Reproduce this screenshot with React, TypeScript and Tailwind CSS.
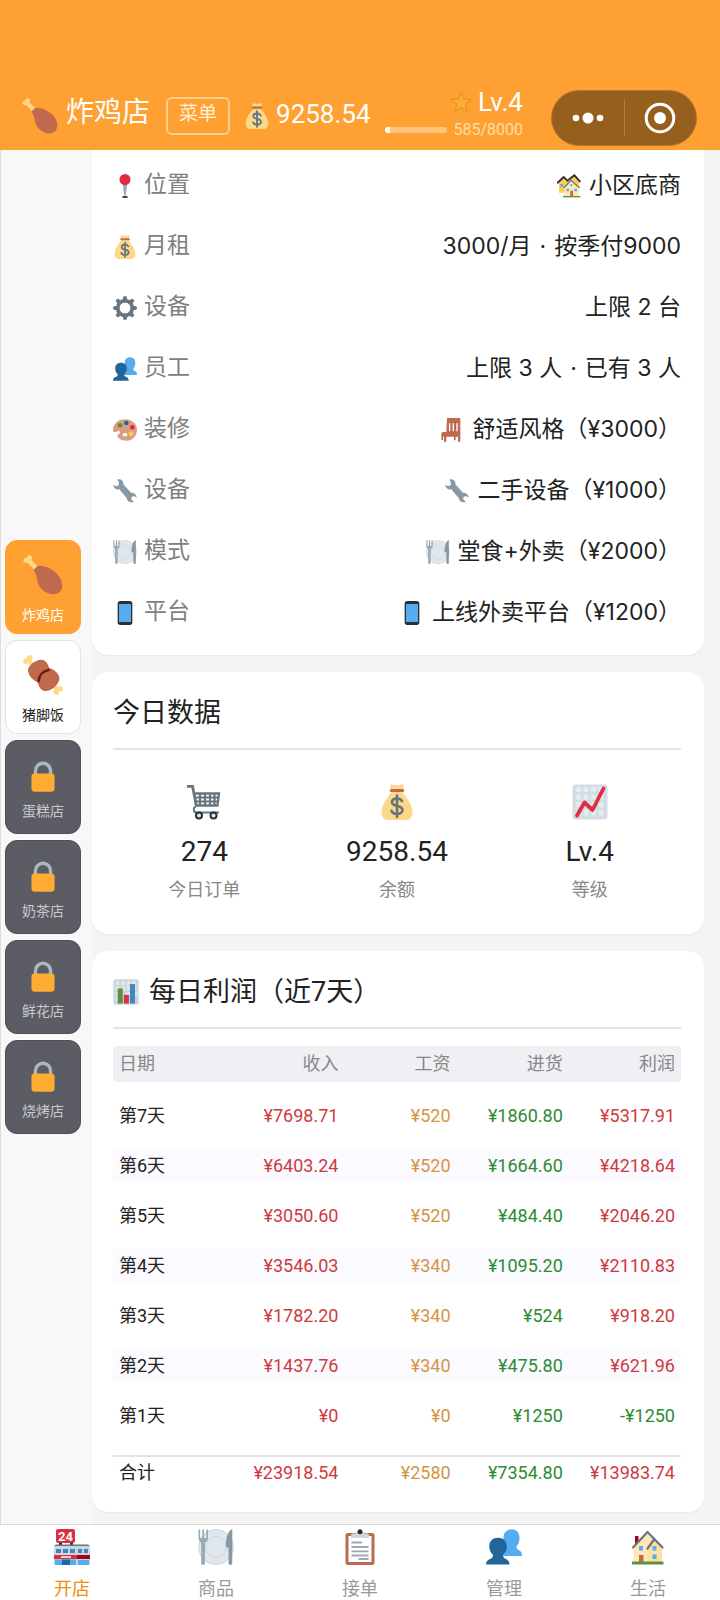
import type { ReactNode } from "react";

type IconName =
  | "leg" | "meat" | "lock" | "bag" | "pin" | "gear" | "people" | "palette" | "wrench"
  | "plate" | "phone" | "houses" | "chair" | "cart" | "trend" | "bars" | "star"
  | "store" | "clipboard" | "house";

const drawings: Record<IconName, ReactNode> = {
  leg: (
    <>
      <path d="M4.5 4.5 13 13" stroke="#FFD983" strokeWidth="4.2" strokeLinecap="round" />
      <circle cx="2.8" cy="4.8" r="2.4" fill="#FFD983" />
      <circle cx="5.8" cy="2.6" r="2.3" fill="#FFD983" />
      <path d="M9.6 13.8C10.6 12 12.5 10 14.2 9.7 17 9.5 23 10.5 28.5 15 33 18.5 35.5 23.5 35.3 28 35 33 31.5 35.5 27 35.4 21 35.3 15.500 31 13.600 25.500 12.400 22 12.500 17.500 9.600 13.800Z" fill="#C1694F" />
    </>
  ),
  meat: (
    <>
      <path d="M4.500 4.500 31.500 31.500" stroke="#FFD983" strokeWidth="3.800" />
      <circle cx="2.600" cy="5.600" r="2.500" fill="#FFD983" />
      <circle cx="6" cy="2.600" r="2.500" fill="#FFD983" />
      <circle cx="33.400" cy="30.400" r="2.500" fill="#FFD983" />
      <circle cx="30" cy="33.400" r="2.500" fill="#FFD983" />
      <path d="M4.500 14.500C3.500 10.500 11 4 16.500 4.200 20.500 4.500 22.700 7.800 23.400 11.800 27.500 12.800 32 16 32.700 20.500 33.300 25.700 26 32.500 20.500 32.500 16.300 32.300 14 28.500 13.300 24.500 9 23 5.500 19.500 4.500 14.500Z" fill="#C1694F" />
      <path d="M14 23.500C14.500 18.500 18 14.500 23 13.500" stroke="#662113" strokeWidth="2.400" strokeLinecap="round" fill="none" />
    </>
  ),
  lock: (
    <>
      <path d="M9.500 18V11a8.500 8.500 0 0 1 17 0v7" stroke="#AAB8C2" strokeWidth="3.800" fill="none" />
      <rect x="5" y="14" width="26" height="20.500" rx="3.500" fill="#FFAC33" />
    </>
  ),
  bag: (
    <>
      <path d="M23.500 8C27 13 33 20 33.500 27.500 33.800 33.500 31 36 26 36H10C5 36 2.200 33.500 2.500 27.500 3 20 9 13 12.500 8Z" fill="#FDD888" />
      <path d="M11.500 1C11.500 0 12.500.3 13.500.6 16 1.300 20 1.300 22.500.6 23.500.3 24.500 0 24.500 1V5.200H11.500Z" fill="#FDD888" />
      <rect x="10.800" y="5" width="14.400" height="3" rx="1.500" fill="#BF6952" />
      <path d="M23 17.200C22 15.200 20.500 14.500 18 14.500 15 14.500 13 16 13 18.300 13 23.500 23.500 20.500 23.500 26 23.500 28.500 21 30 18 30 15.300 30 13.300 29 12.500 26.800M18 11.500V33" stroke="#67757F" strokeWidth="2.600" strokeLinecap="round" fill="none" />
    </>
  ),
  pin: (
    <>
      <ellipse cx="18" cy="34.500" rx="4.500" ry="1.500" fill="#292F33" />
      <path d="M14.500 14H21.500L19 32.500a1 1 0 0 1-2 0Z" fill="#99AAB5" />
      <circle cx="18" cy="8.300" r="8.300" fill="#DD2E44" />
    </>
  ),
  gear: (
    <>
      <circle cx="18" cy="18" r="11" fill="none" stroke="#66757F" strokeWidth="5.400" />
      <path d="M18 3V7M18 29V33M3 18H7M29 18H33M7.400 7.400 10 10M26 26 28.600 28.600M28.600 7.400 26 10M10 26 7.400 28.600" stroke="#66757F" strokeWidth="6" strokeLinecap="round" />
    </>
  ),
  people: (
    <>
      <path d="M17.500 9C17.500 3.500 20.500.3 25.500.3S33.500 3.500 33.500 9C33.500 13 32.300 15.500 30.500 17.300 30.500 19.500 31 20.500 33.500 21.500 35.500 22.500 36 24.500 36 27H17Z" fill="#55ACEE" />
      <path d="M3.300 17.500C3.300 12 6.800 8.800 12 8.800S20.800 12 20.800 17.500C20.800 21.500 19 24 17 25.800 17 28 17.500 29 20 30 22.500 31 23.500 33 23.500 35.500H0C0 33 1 31 4 30 6.500 29 7 28 7 25.800 5 24 3.300 21.500 3.300 17.500Z" fill="#226699" />
    </>
  ),
  palette: (
    <>
      <path d="M18 2C8 2 0 9 0 18 0 21 2.500 22 5.500 20.300 9 18.300 12 19.500 10 22.500 7.500 26 5 26.500 8 29.500 11 32.500 15 34 20 34 29 34 36 27 36 17.500 36 8.500 28 2 18 2Z" fill="#D99E82" />
      <ellipse cx="18" cy="25" rx="3.600" ry="2.400" fill="#fff" />
      <circle cx="10.500" cy="11" r="3.500" fill="#5C913B" />
      <circle cx="20" cy="7.500" r="3.500" fill="#226699" />
      <circle cx="29" cy="14" r="3.500" fill="#DD2E44" />
      <circle cx="27" cy="23.500" r="3.500" fill="#FFCC4D" />
    </>
  ),
  wrench: (
    <path d="M8.500.5C12.500.3 16 3.500 15.800 8.200L27 20.500C31.500 20 35.300 23.500 35.600 27.800L31 25.500 27.500 27.500 27.700 31.300 31.500 34C27 36.500 21 34 20.500 28.500L9.500 15.500C5 16.500.8 13.800.4 8.500L5 11 8.800 9 8.700 4.800 6.700 1Z" fill="#8899A6" />
  ),
  plate: (
    <>
      <circle cx="18" cy="18" r="17.800" fill="#CCD6DD" />
      <circle cx="18" cy="18" r="16.800" fill="#E1E8ED" />
      <circle cx="18" cy="18" r="10.500" fill="#E1E8ED" stroke="#CCD6DD" />
      <path d="M.5.5V9C.5 11.500 2 13 3.200 13.500V34a1.900 1.900 0 0 0 3.800 0V13.500C8.500 13 10 11.500 10 9V.5H8.300V9H6.100V.5H4.300V9H2.200V.5Z" fill="#99AAB5" />
      <path d="M34 .3C30 2 27.800 8 27.800 18.500H30.500V34a1.900 1.900 0 0 0 3.800 0V.3Z" fill="#8899A6" />
    </>
  ),
  phone: (
    <>
      <rect x="7" y="0" width="22" height="36" rx="4" fill="#292F33" />
      <rect x="9" y="4.500" width="18" height="27" fill="#55ACEE" />
    </>
  ),
  houses: (
    <>
      <path d="M3 12 10 5 18 12V28H3Z" fill="#FFCC4D" />
      <path d="M20 7 27 3 33 11V23H20Z" fill="#FFCC4D" />
      <path d="M0 14 10 4.500 17 11M17 9 26 2 35 12" stroke="#292F33" strokeWidth="2.800" fill="none" />
      <path d="M11 20 21 9 33 20V33H11Z" fill="#FFE8B6" />
      <path d="M10 21 21 9.500 34 21" stroke="#66757F" strokeWidth="2" fill="none" />
      <path d="M5 15h4v4H5ZM14 22h4v4h-4ZM26 22h4v4h-4ZM20 15h3v3h-3Z" fill="#55ACEE" />
      <path d="M20 25h4v8h-4Z" fill="#C1694F" />
      <path d="M9 33H35v2H9Z" fill="#5C913B" />
    </>
  ),
  chair: (
    <path d="M9 1C9 .3 10 0 12 0H27C28.500 0 29 .5 29 2V34.500C29 36.500 25.500 36.500 25.500 34.500V28H22V33.500H19.500V28H8V34.500C8 36.500 4.500 36.500 4.500 34.500V28H3V33H.5V24C.5 22 2 21 4 21H8ZM12 8V20H14V8ZM17.500 8V20H19.500V8ZM23 8V20H25V8Z" fill="#C1694F" fillRule="evenodd" />
  ),
  cart: (
    <>
      <path d="M1 2.300H6.500L10.500 22.500" stroke="#66757F" strokeWidth="2.800" fill="none" />
      <path d="M8 9.500H33L31.500 21.500H10.500" fill="none" stroke="#66757F" strokeWidth="2.300" />
      <path d="M9 13.500H32.500M9.500 17.500H32M14 10V21M19 10V21M24 10V21M28.500 10V21" stroke="#66757F" strokeWidth="2.200" />
      <path d="M10 22.500C7 23.500 7 28.500 10.500 28.500H33" stroke="#66757F" strokeWidth="2" fill="none" />
      <circle cx="13" cy="31.500" r="3" fill="#E1E8ED" stroke="#292F33" strokeWidth="2" />
      <circle cx="27.500" cy="31.500" r="3" fill="#E1E8ED" stroke="#292F33" strokeWidth="2" />
    </>
  ),
  trend: (
    <>
      <rect x=".5" y=".5" width="35" height="35" rx="3" fill="#D3DCE3" />
      <path d="M4 3h5v5H4ZM11.500 3h5v5h-5ZM19 3h5v5h-5ZM26.500 3h5v5h-5ZM4 10.500h5v5H4ZM11.500 10.500h5v5h-5ZM19 10.500h5v5h-5ZM26.500 10.500h5v5h-5ZM4 18h5v5H4ZM11.500 18h5v5h-5ZM19 18h5v5h-5ZM26.500 18h5v5h-5ZM4 25.500h5v6H4ZM11.500 25.500h5v6h-5ZM19 25.500h5v6h-5ZM26.500 25.500h5v6h-5Z" fill="#E4EAEE" />
      <path d="M5 31.500 12.500 18.500 20.500 26 31.500 4.500" stroke="#DD2E44" strokeWidth="3.800" strokeLinecap="round" strokeLinejoin="round" fill="none" />
    </>
  ),
  bars: (
    <>
      <rect x=".5" y=".5" width="35" height="35" rx="3" fill="#CCD6DD" />
      <path d="M4 3h5v5H4ZM11.500 3h5v5h-5ZM19 3h5v5h-5ZM26.500 3h5v5h-5ZM4 10.500h5v5H4ZM11.500 10.500h5v5h-5ZM19 10.500h5v5h-5ZM26.500 10.500h5v5h-5ZM4 18h5v5H4ZM19 18h5v5h-5ZM4 25.500h5v6H4ZM29 18h5v5h-5Z" fill="#E1E8ED" />
      <path d="M6.500 13H13.500V34H6.500Z" fill="#5C913B" />
      <path d="M15 22H22V34H15Z" fill="#DD2E44" />
      <path d="M23.500 7H30.500V34H23.500Z" fill="#3B88C3" />
    </>
  ),
  star: (
    <path d="M18 2 22.400 13.200 34.500 13.900 25 21.500 28.300 33.500 18 26.800 7.700 33.500 11 21.500 1.500 13.900 13.600 13.200Z" fill="#FFAC33" stroke="#E08F1C" strokeWidth="1.500" strokeLinejoin="round" />
  ),
  store: (
    <>
      <path d="M5 13h3v4H5ZM16 13h3v4h-3Z" fill="#292F33" />
      <rect x="2" y="0" width="19" height="14" rx="2" fill="#DD2E44" />
      <text x="11.500" y="11.800" textAnchor="middle" fill="#fff" fontSize="13" fontWeight="700" fontFamily="Roboto, sans-serif">24</text>
      <path d="M0 17H36V36H0Z" fill="#CCD6DD" />
      <path d="M0 17 2 15.500H34L36 17Z" fill="#66757F" />
      <path d="M2 20h5v4H2ZM9 20h5v4H9ZM16 20h5v4h-5ZM24 20h4v4h-4ZM30 20h4v4h-4Z" fill="#3B88C3" />
      <path d="M0 26H23V30H0Z" fill="#DD2E44" />
      <path d="M23 26H36V30H23Z" fill="#A0041E" />
      <path d="M7 27.300h10v1.500H7Z" fill="#fff" />
      <path d="M1 30.500H22V36H1ZM24 31H35V36H24Z" fill="#55ACEE" />
      <path d="M8 30.500h8V36H8Z" fill="#226699" />
    </>
  ),
  clipboard: (
    <>
      <rect x="3.500" y="4" width="29" height="32" rx="2.500" fill="#C1694F" />
      <path d="M6.500 7H29.500V33H6.500Z" fill="#fff" />
      <path d="M9 9V6.500C9 5 10 4.500 11.500 4.500H13.500C14 2.500 16 2.500 18 2.500S22 2.500 22.500 4.500H24.500C26 4.500 27 5 27 6.500V9Z" fill="#CCD6DD" />
      <circle cx="18" cy="2.700" r="2.500" fill="#292F33" />
      <path d="M9.500 13.500H20M9.500 18H26.500M9.500 22.300H26.500M9.500 26.500H26.500M16.500 30H26.500" stroke="#99AAB5" strokeWidth="1.800" />
    </>
  ),
  house: (
    <>
      <path d="M5 7H8.500V15H5Z" fill="#A0041E" />
      <path d="M3.500 17 17 3.500 32 17V33H3.500Z" fill="#FFE8B6" />
      <path d="M17.500 19 24 9 32 17V33H17.500Z" fill="#FFE0A0" />
      <path d="M3 18.500 17.500 3 32.500 18.500M17.500 19.500 24.500 10" stroke="#66757F" strokeWidth="2.200" strokeLinecap="round" strokeLinejoin="round" fill="none" />
      <path d="M9 17h4v4.500H9ZM22.500 17h4v4.500h-4ZM22.500 25.500h4v4.500h-4Z" fill="#55ACEE" />
      <path d="M9 26h4.500v7H9Z" fill="#C1694F" />
      <path d="M2 32.500H33.500V35.500H2Z" fill="#5C913B" />
    </>
  ),
};

function Icon({ name, className }: { name: IconName; className: string }) {
  return (
    <svg viewBox="0 0 36 36" fill="none" aria-hidden="true" className={`shrink-0 ${className}`}>
      {drawings[name]}
    </svg>
  );
}

const details: { icon: IconName; label: string; valueIcon?: IconName; value: string[] }[] = [
  { icon: "pin", label: "位置", valueIcon: "houses", value: ["小区底商"] },
  { icon: "bag", label: "月租", value: ["3000/月", "·", "按季付9000"] },
  { icon: "gear", label: "设备", value: ["上限 2 台"] },
  { icon: "people", label: "员工", value: ["上限 3 人", "·", "已有 3 人"] },
  { icon: "palette", label: "装修", valueIcon: "chair", value: ["舒适风格（¥3000）"] },
  { icon: "wrench", label: "设备", valueIcon: "wrench", value: ["二手设备（¥1000）"] },
  { icon: "plate", label: "模式", valueIcon: "plate", value: ["堂食+外卖（¥2000）"] },
  { icon: "phone", label: "平台", valueIcon: "phone", value: ["上线外卖平台（¥1200）"] },
];

const stats: { icon: IconName; value: string; label: string }[] = [
  { icon: "cart", value: "274", label: "今日订单" },
  { icon: "bag", value: "9258.54", label: "余额" },
  { icon: "trend", value: "Lv.4", label: "等级" },
];

const profits = [
  ["第7天", "¥7698.71", "¥520", "¥1860.80", "¥5317.91"],
  ["第6天", "¥6403.24", "¥520", "¥1664.60", "¥4218.64"],
  ["第5天", "¥3050.60", "¥520", "¥484.40", "¥2046.20"],
  ["第4天", "¥3546.03", "¥340", "¥1095.20", "¥2110.83"],
  ["第3天", "¥1782.20", "¥340", "¥524", "¥918.20"],
  ["第2天", "¥1437.76", "¥340", "¥475.80", "¥621.96"],
  ["第1天", "¥0", "¥0", "¥1250", "-¥1250"],
];

const totals = ["合计", "¥23918.54", "¥2580", "¥7354.80", "¥13983.74"];

const shops: { name: string; state: "active" | "open" | "locked"; icon: IconName }[] = [
  { name: "炸鸡店", state: "active", icon: "leg" },
  { name: "猪脚饭", state: "open", icon: "meat" },
  { name: "蛋糕店", state: "locked", icon: "lock" },
  { name: "奶茶店", state: "locked", icon: "lock" },
  { name: "鲜花店", state: "locked", icon: "lock" },
  { name: "烧烤店", state: "locked", icon: "lock" },
];

const shopStyles = {
  active: "bg-[#ffa132] border-[#ffa132] text-white gap-2.5 pt-3.5",
  open: "bg-white border-[#e2e2e2] text-[#222] gap-2.5 pt-3.5",
  locked: "bg-[#5b5c64] border-[#4d4e56] text-[#c9c9cc] gap-2 pt-5",
};

const tabs: { icon: IconName; label: string }[] = [
  { icon: "store", label: "开店" },
  { icon: "plate", label: "商品" },
  { icon: "clipboard", label: "接单" },
  { icon: "people", label: "管理" },
  { icon: "house", label: "生活" },
];

function amountColor(column: number, text: string) {
  if (column === 0) return "text-[#222] text-left";
  if (column === 2) return "text-[#d49544] text-right";
  if (column === 3 || text.startsWith("-")) return "text-[#2e8b32] text-right";
  return "text-[#cf3a3f] text-right";
}

function Header() {
  return (
    <header className="flex h-[150px] items-end bg-[#ffa132] pr-[23px] pb-1 pl-[22px] text-white">
      <div className="flex h-14 flex-1 items-center pb-1">
        <Icon name="leg" className="h-9 w-9" />
        <h1 className="ml-2 pb-1.5 text-[28px] leading-9">炸鸡店</h1>
        <button className="ml-4 flex h-[38px] w-16 items-center justify-center rounded-md border-2 border-[#ffcf8f] pb-1 text-[19px] text-[#fff0d8]">
          菜单
        </button>
        <Icon name="bag" className="ml-3.5 h-[26px] w-[26px]" />
        <span className="ml-1.5 pb-1 text-[26px] leading-9">9258.54</span>
      </div>
      <div className="mr-7 flex h-14 flex-col items-end justify-between">
        <div className="flex items-center gap-1.5 text-[26px] leading-6">
          <Icon name="star" className="h-[22px] w-[22px]" />
          Lv.4
        </div>
        <div className="flex items-center gap-1.5 text-base leading-8 text-[#ffdcab]">
          <div className="h-1.5 w-[62px] overflow-hidden rounded-full bg-[#ffc37c]">
            <div className="h-full bg-white" style={{ width: `${(585 / 8000) * 100}%` }} />
          </div>
          585/8000
        </div>
      </div>
      <div className="flex h-14 w-[146px] items-center rounded-full border border-[#b5752b] bg-[#965f1e]">
        <button aria-label="更多" className="flex h-full flex-1 items-center justify-center">
          <svg viewBox="0 0 32 12" className="h-3 w-8" fill="#fff">
            <circle cx="4" cy="6" r="3.300" />
            <circle cx="16" cy="6" r="5.500" />
            <circle cx="28" cy="6" r="3.300" />
          </svg>
        </button>
        <div className="h-9 w-px bg-[#b5803f]" />
        <button aria-label="关闭" className="flex h-full flex-1 items-center justify-center">
          <svg viewBox="0 0 32 32" className="h-8 w-8" fill="none">
            <circle cx="16" cy="16" r="13.800" stroke="#fff" strokeWidth="3" />
            <circle cx="16" cy="16" r="6" fill="#fff" />
          </svg>
        </button>
      </div>
    </header>
  );
}

function CardTitle({ children }: { children: ReactNode }) {
  return (
    <h2 className="flex h-[78px] items-center gap-2.5 border-b-2 border-[#e4e4e4] pt-1.5 text-[27px] text-[#222]">
      {children}
    </h2>
  );
}

export default function App() {
  return (
    <div lang="zh-CN" className="flex min-h-screen flex-col bg-[#f4f4f4] font-[Roboto,'Noto_Sans_CJK_SC',sans-serif]">
      <Header />
      <div className="flex flex-1">
        <aside className="flex w-[92px] shrink-0 flex-col justify-center gap-1.5 border-l border-[#dcdcdc] bg-[#f8f8f8] pl-1">
          {shops.map((shop) => (
            <button
              key={shop.name}
              className={`flex h-[94px] w-[76px] flex-col items-center rounded-xl border text-sm leading-5 ${shopStyles[shop.state]}`}
            >
              <Icon name={shop.icon} className={shop.state === "locked" ? "h-8 w-8" : "h-10 w-10"} />
              {shop.name}
            </button>
          ))}
        </aside>

        <main className="flex min-w-0 flex-1 flex-col gap-[17px] pr-4 pb-3">
          <section className="rounded-b-2xl bg-white pt-[5px] pr-[23px] pb-3 pl-[21px] shadow-xs">
            <dl>
              {details.map((row) => (
                <div key={row.icon} className="flex h-[61px] items-center justify-between text-[23px]">
                  <dt className="flex items-center gap-[7px] text-[#808080]">
                    <Icon name={row.icon} className="h-6 w-6" />
                    {row.label}
                  </dt>
                  <dd className="flex items-center gap-2 font-[Inter,'Noto_Sans_CJK_SC',sans-serif] text-[#222]">
                    {row.valueIcon && <Icon name={row.valueIcon} className="h-6 w-6" />}
                    {row.value.map((part) => (
                      <span key={part}>{part}</span>
                    ))}
                  </dd>
                </div>
              ))}
            </dl>
          </section>

          <section className="rounded-2xl bg-white pr-[23px] pb-[30px] pl-[21px] shadow-xs">
            <CardTitle>今日数据</CardTitle>
            <div className="grid grid-cols-3 gap-2.5 pt-[34px]">
              {stats.map((stat) => (
                <div key={stat.label} className="flex flex-col items-center">
                  <Icon name={stat.icon} className="h-9 w-9" />
                  <div className="mt-3.5 text-[28px] leading-9 text-[#222]">{stat.value}</div>
                  <div className="mt-1.5 text-lg leading-7 text-[#888]">{stat.label}</div>
                </div>
              ))}
            </div>
          </section>

          <section className="rounded-2xl bg-white pr-[23px] pb-2 pl-[21px] shadow-xs">
            <CardTitle>
              <Icon name="bars" className="h-[26px] w-[26px]" />
              每日利润（近7天）
            </CardTitle>
            <table className="w-full table-fixed border-separate border-spacing-x-0 border-spacing-y-[17px] text-lg">
              <thead>
                <tr className="h-9 text-[#888]">
                  <th className="w-[21%] rounded-l bg-[#efeff4] px-1.5 py-0 text-left font-normal">日期</th>
                  <th className="bg-[#efeff4] px-1.5 py-0 text-right font-normal">收入</th>
                  <th className="bg-[#efeff4] px-1.5 py-0 text-right font-normal">工资</th>
                  <th className="bg-[#efeff4] px-1.5 py-0 text-right font-normal">进货</th>
                  <th className="rounded-r bg-[#efeff4] px-1.5 py-0 text-right font-normal">利润</th>
                </tr>
              </thead>
              <tbody>
                {profits.map((row) => (
                  <tr key={row[0]} className="h-[33px] even:bg-[#fafaff]">
                    {row.map((text, column) => (
                      <td key={column} className={`px-1.5 py-0 ${amountColor(column, text)}`}>
                        {text}
                      </td>
                    ))}
                  </tr>
                ))}
              </tbody>
              <tfoot>
                <tr>
                  {totals.map((text, column) => (
                    <td key={column} className={`p-0 pt-1.5 ${amountColor(column, text)}`}>
                      <div className="border-t-2 border-[#e4e4e4] px-1.5 pt-0.5 leading-7">{text}</div>
                    </td>
                  ))}
                </tr>
              </tfoot>
            </table>
          </section>
        </main>
      </div>

      <nav className="grid grid-cols-5 border-t border-[#d8d8d8] bg-white">
        {tabs.map((tab, index) => (
          <a
            key={tab.label}
            href="#"
            aria-current={index === 0 ? "page" : undefined}
            className={`flex h-[75px] flex-col items-center gap-3 pt-1 text-lg leading-6 ${index === 0 ? "text-[#f08c0a]" : "text-[#999]"}`}
          >
            <Icon name={tab.icon} className="h-9 w-9" />
            {tab.label}
          </a>
        ))}
      </nav>
    </div>
  );
}
